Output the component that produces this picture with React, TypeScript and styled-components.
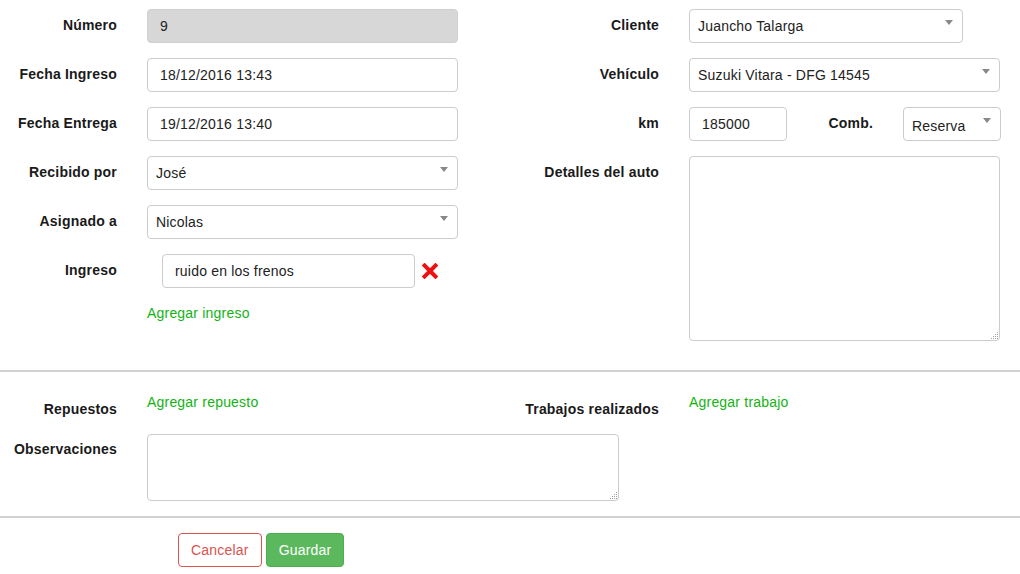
import React from "react";
import styled, { createGlobalStyle } from "styled-components";

const Global = createGlobalStyle`
  html, body { margin: 0; padding: 0; background: #fff; }
  body {
    font-family: "Liberation Sans", Arial, sans-serif;
    font-size: 14px;
    line-height: 20px;
    letter-spacing: 0.2px;
    color: #222;
  }
  * { box-sizing: border-box; }
  input, select, textarea, button { letter-spacing: 0.2px; }
`;

const Page = styled.div`
  width: 1020px;
  padding-top: 9px;
`;

const Columns = styled.div`
  display: flex;
`;

const Column = styled.div<{ $width?: number }>`
  display: flex;
  flex-direction: column;
  width: ${(p) => (p.$width ? `${p.$width}px` : "auto")};
  flex: ${(p) => (p.$width ? "none" : "1")};
`;

const Row = styled.div<{ $mb?: number }>`
  display: grid;
  grid-template-columns: 117px auto;
  column-gap: 30px;
  align-items: start;
  margin-bottom: ${(p) => (p.$mb ?? 15)}px;
`;

const Label = styled.label<{ $pt?: number }>`
  display: flex;
  justify-content: flex-end;
  font-weight: bold;
  color: #1a1a1a;
  padding-top: ${(p) => (p.$pt ?? 6)}px;
  line-height: 20px;
  white-space: nowrap;
`;

const Input = styled.input<{ $w?: number; $disabled?: boolean }>`
  display: block;
  width: ${(p) => p.$w ?? 311}px;
  height: 34px;
  padding: 6px 12px;
  font-family: inherit;
  font-size: 14px;
  color: #222;
  background: ${(p) => (p.$disabled ? "#d7d7d7" : "#fff")};
  border: 1px solid ${(p) => (p.$disabled ? "#d0d0d0" : "#ccc")};
  border-radius: 4px;
  outline: none;
`;

const SelectWrap = styled.div<{ $w?: number }>`
  position: relative;
  width: ${(p) => p.$w ?? 311}px;
  &::after {
    content: "";
    position: absolute;
    top: 11px;
    right: 10px;
    width: 0;
    height: 0;
    border-left: 4px solid transparent;
    border-right: 4px solid transparent;
    border-top: 5px solid #888;
    pointer-events: none;
  }
`;

const Select = styled.select<{ $pt?: number }>`
  display: block;
  width: 100%;
  height: 34px;
  padding: ${(p) => p.$pt ?? 0}px 20px 0 8px;
  font-family: inherit;
  font-size: 14px;
  color: #222;
  background: #fff;
  border: 1px solid #ccc;
  border-radius: 4px;
  appearance: none;
  -webkit-appearance: none;
  outline: none;
  line-height: 20px;
`;

const AreaWrap = styled.div<{ $w: number; $h: number }>`
  position: relative;
  width: ${(p) => p.$w}px;
  height: ${(p) => p.$h}px;
`;

const TextArea = styled.textarea`
  display: block;
  width: 100%;
  height: 100%;
  border: 1px solid #ccc;
  border-radius: 4px;
  font-family: inherit;
  font-size: 14px;
  padding: 6px 12px;
  outline: none;
  margin: 0;
  resize: none;
`;

const Grip = styled.svg`
  position: absolute;
  right: 2px;
  bottom: 2px;
  pointer-events: none;
`;

const InlineGroup = styled.div`
  display: flex;
  align-items: flex-start;
`;

const SubLabel = styled(Label)`
  width: 86px;
  margin-right: 30px;
`;

const IngresoLine = styled.div`
  display: flex;
  align-items: center;
  padding-left: 15px;
  gap: 7px;
`;

const RemoveButton = styled.span`
  display: inline-flex;
  width: 16px;
  height: 16px;
  cursor: pointer;
`;

const AddLink = styled.a`
  color: #12b312;
  text-decoration: none;
  line-height: 20px;
  display: inline-block;
  cursor: pointer;
`;

const Divider = styled.hr<{ $mt: number; $mb: number }>`
  border: 0;
  height: 2px;
  background: #d2d2d2;
  margin: ${(p) => p.$mt}px 0 ${(p) => p.$mb}px;
`;

const Actions = styled.div`
  display: flex;
  gap: 4px;
  padding-left: 178px;
`;

const Button = styled.button<{ $variant: "cancel" | "save" }>`
  height: 34px;
  padding: 6px 12px;
  font-family: inherit;
  font-size: 14px;
  line-height: 20px;
  border-radius: 4px;
  cursor: pointer;
  border: 1px solid ${(p) => (p.$variant === "cancel" ? "#d9534f" : "#4cae4c")};
  background: ${(p) => (p.$variant === "cancel" ? "#fff" : "#5cb85c")};
  color: ${(p) => (p.$variant === "cancel" ? "#d9534f" : "#fff")};
`;

const XIcon = () => (
  <svg width="16" height="16" viewBox="0 0 16 16">
    <path
      d="M2.5 2.5 L13.5 13.5 M13.5 2.5 L2.5 13.5"
      stroke="#ee1111"
      strokeWidth="4"
      strokeLinecap="square"
    />
  </svg>
);

const gripDots: [number, number][] = [
  [6, 0],
  [4, 2],
  [6, 2],
  [2, 4],
  [4, 4],
  [6, 4],
  [0, 6],
  [2, 6],
  [4, 6],
  [6, 6],
];

const Area = ({ w, h }: { w: number; h: number }) => (
  <AreaWrap $w={w} $h={h}>
    <TextArea />
    <Grip width="7" height="7" viewBox="0 0 7 7">
      {gripDots.map(([x, y]) => (
        <rect key={`${x}-${y}`} x={x} y={y} width="1" height="1" fill="#a0a0a0" />
      ))}
    </Grip>
  </AreaWrap>
);

export default function App() {
  return (
    <Page>
      <Global />
      <Columns>
        <Column $width={542}>
          <Row>
            <Label>Número</Label>
            <Input $disabled value="9" readOnly />
          </Row>
          <Row>
            <Label>Fecha Ingreso</Label>
            <Input value="18/12/2016 13:43" readOnly />
          </Row>
          <Row>
            <Label>Fecha Entrega</Label>
            <Input value="19/12/2016 13:40" readOnly />
          </Row>
          <Row>
            <Label>Recibido por</Label>
            <SelectWrap>
              <Select defaultValue="jose">
                <option value="jose">José</option>
              </Select>
            </SelectWrap>
          </Row>
          <Row>
            <Label>Asignado a</Label>
            <SelectWrap>
              <Select defaultValue="nicolas">
                <option value="nicolas">Nicolas</option>
              </Select>
            </SelectWrap>
          </Row>
          <Row>
            <Label>Ingreso</Label>
            <IngresoLine>
              <Input $w={253} value="ruido en los frenos" readOnly />
              <RemoveButton>
                <XIcon />
              </RemoveButton>
            </IngresoLine>
          </Row>
          <Row $mb={0}>
            <span />
            <div>
              <AddLink>Agregar ingreso</AddLink>
            </div>
          </Row>
        </Column>
        <Column>
          <Row>
            <Label>Cliente</Label>
            <SelectWrap $w={274}>
              <Select defaultValue="jt">
                <option value="jt">Juancho Talarga</option>
              </Select>
            </SelectWrap>
          </Row>
          <Row>
            <Label>Vehículo</Label>
            <SelectWrap>
              <Select defaultValue="sv">
                <option value="sv">Suzuki Vitara - DFG 14545</option>
              </Select>
            </SelectWrap>
          </Row>
          <Row>
            <Label>km</Label>
            <InlineGroup>
              <Input $w={98} value="185000" readOnly />
              <SubLabel>Comb.</SubLabel>
              <SelectWrap $w={98}>
                <Select $pt={3} defaultValue="reserva">
                  <option value="reserva">Reserva</option>
                </Select>
              </SelectWrap>
            </InlineGroup>
          </Row>
          <Row $mb={0}>
            <Label>Detalles del auto</Label>
            <Area w={311} h={185} />
          </Row>
        </Column>
      </Columns>
      <Divider $mt={29} $mb={20} />
      <Columns>
        <Column $width={542}>
          <Row $mb={15}>
            <Label $pt={7}>Repuestos</Label>
            <div>
              <AddLink>Agregar repuesto</AddLink>
            </div>
          </Row>
        </Column>
        <Column>
          <Row $mb={15}>
            <Label $pt={7}>Trabajos realizados</Label>
            <div>
              <AddLink>Agregar trabajo</AddLink>
            </div>
          </Row>
        </Column>
      </Columns>
      <Row $mb={0}>
        <Label $pt={5}>Observaciones</Label>
        <Area w={472} h={67} />
      </Row>
      <Divider $mt={15} $mb={15} />
      <Actions>
        <Button $variant="cancel">Cancelar</Button>
        <Button $variant="save">Guardar</Button>
      </Actions>
    </Page>
  );
}
